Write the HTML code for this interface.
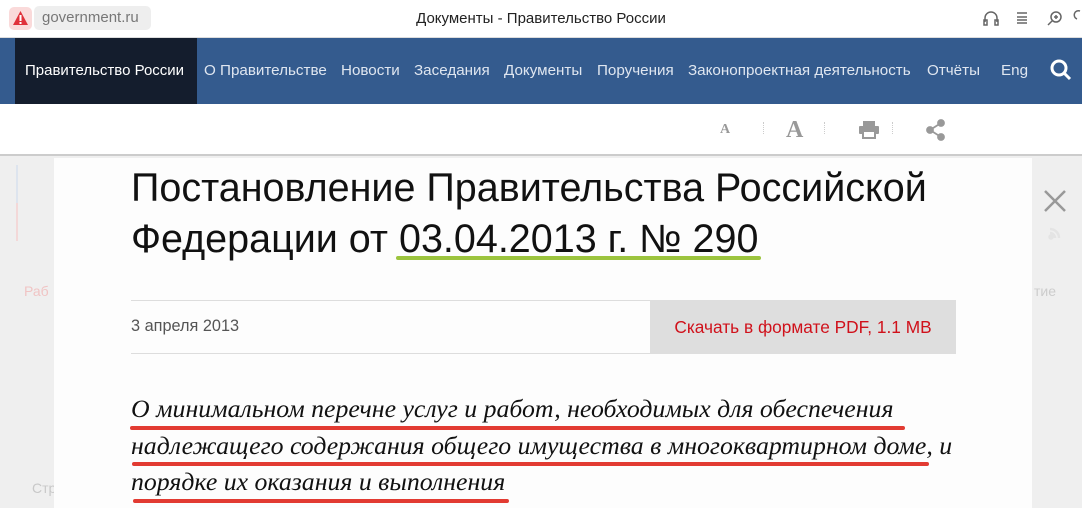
<!DOCTYPE html>
<html><head><meta charset="utf-8"><style>
*{margin:0;padding:0;box-sizing:border-box}
body{width:1082px;height:508px;overflow:hidden;background:#efefef;font-family:"Liberation Sans",sans-serif;position:relative}
.bar{position:absolute;left:0;top:0;width:1082px;height:38px;background:#fff;border-bottom:1px solid #ddd}
.warn{position:absolute;left:9px;top:7px;width:23px;height:23px;background:#fadada;border-radius:5px}
.url{position:absolute;left:34px;top:6px;width:117px;height:24px;background:#eee;border-radius:5px;color:#777;font-size:15px;line-height:24px;padding-left:8px}
.ttl{position:absolute;left:0;width:1082px;top:10px;text-align:center;font-size:15px;color:#222}
.nav{position:absolute;top:38px;left:0;width:1082px;height:66px;background:#345b8e;color:#dfe6f0;font-size:15.2px}
.nav span{position:absolute;top:24px}
.brand{position:absolute;left:15px;top:0;width:182px;height:66px;background:#141d2d;color:#fff;font-size:15px;line-height:66px;padding-left:10px}
.tool{position:absolute;top:104px;left:0;width:1082px;height:52px;background:#fff;border-bottom:2px solid #ccc}
.panel{position:absolute;left:54px;top:158px;width:978px;height:350px;background:#fdfdfd}
h1{position:absolute;left:131px;top:163px;font-weight:normal;font-size:39.5px;line-height:51px;color:#111;white-space:nowrap}
.p{position:absolute;font-family:"Liberation Serif",serif;font-style:italic;font-size:25.8px;color:#111;white-space:nowrap}
.u{position:absolute;height:4px;background:#e23b32;border-radius:2px}
</style></head><body>
<div class="bar">
<div class="warn"><svg width="23" height="23"><path d="M11.5 4 L19 18 H4Z" fill="#e0303a"/><rect x="10.5" y="8" width="2" height="6" fill="#fff"/><rect x="10.5" y="15" width="2" height="2" fill="#fff"/></svg></div>
<div class="url">government.ru</div>
<div class="ttl">Документы - Правительство России</div>
<svg style="position:absolute;left:980px;top:8px" width="102" height="22" fill="none" stroke="#666" stroke-width="1.5"><path d="M5 14v-4a6 6 0 0 1 12 0v4M4 12h3v5H4zM15 12h3v5h-3z"/><path d="M37 5h10M37 9h10M37 12h10M37 15h10"/><circle cx="76" cy="9" r="5"/><path d="M72 13l-4 4M76 7v4M74 9h4"/><path d="M100 3a4 4 0 0 0-3 8"/></svg>
</div>
<div class="nav">
<div class="brand">Правительство России</div>
<span style="left:204px">О Правительстве</span>
<span style="left:341px">Новости</span>
<span style="left:414px">Заседания</span>
<span style="left:504px">Документы</span>
<span style="left:597px">Поручения</span>
<span style="left:688px">Законопроектная деятельность</span>
<span style="left:927px">Отчёты</span>
<span style="left:1001px">Eng</span>
<svg style="position:absolute;left:1049px;top:20px" width="24" height="24" fill="none" stroke="#fff" stroke-width="3"><circle cx="10" cy="10" r="7"/><path d="M15 15l6 6"/></svg>
</div>
<div class="tool">
<span style="position:absolute;left:720px;top:18px;font-family:'Liberation Serif',serif;font-weight:bold;font-size:14px;color:#999">A</span>
<span style="position:absolute;left:786px;top:13px;font-family:'Liberation Serif',serif;font-weight:bold;font-size:24px;color:#999">A</span>
<div style="position:absolute;left:763px;top:18px;height:12px;border-left:1px dotted #ccc"></div>
<div style="position:absolute;left:824px;top:18px;height:12px;border-left:1px dotted #ccc"></div>
<div style="position:absolute;left:892px;top:18px;height:12px;border-left:1px dotted #ccc"></div>
<svg style="position:absolute;left:858px;top:16px" width="22" height="20" fill="#999"><rect x="5" y="1" width="12" height="5"/><rect x="1" y="6" width="20" height="8" rx="1"/><rect x="5" y="11" width="12" height="7" fill="#fff" stroke="#999" stroke-width="2"/></svg>
<svg style="position:absolute;left:926px;top:15px" width="20" height="22" fill="#999" stroke="#999" stroke-width="1.8"><circle cx="15" cy="4" r="3"/><circle cx="4" cy="11" r="3"/><circle cx="15" cy="18" r="3"/><path d="M15 4L4 11L15 18" fill="none"/></svg>
</div>
<div style="position:absolute;left:16px;top:165px;width:2px;height:76px;background:linear-gradient(#dde4ee 50%,#f3d8d8 50%)"></div>
<div style="position:absolute;left:24px;top:283px;font-size:14px;color:#f0c4c4">Раб</div>
<div style="position:absolute;left:32px;top:480px;font-size:14px;color:#c8c8c8">Стр</div>
<div style="position:absolute;left:1034px;top:283px;font-size:14px;color:#ccc">тие</div>
<div class="panel"></div>
<svg style="position:absolute;left:1043px;top:189px" width="24" height="24" stroke="#999" stroke-width="2.5"><path d="M2 2L22 22M22 2L2 22"/></svg>
<svg style="position:absolute;left:1048px;top:224px" width="16" height="16" fill="none" stroke="#e4e4e4" stroke-width="2.5"><path d="M2 5a9 9 0 0 1 9 9M2 9a5 5 0 0 1 5 5"/><circle cx="3" cy="13" r="1.5" fill="#e4e4e4"/></svg>
<h1>Постановление Правительства Российской<br>Федерации от 03.04.2013 г. № 290</h1>
<div style="position:absolute;left:396px;top:256px;width:365px;height:4px;background:#9cc43e;border-radius:2px"></div>
<div style="position:absolute;left:131px;top:300px;width:825px;border-top:1px solid #ddd"></div>
<div style="position:absolute;left:131px;top:353px;width:825px;border-top:1px solid #ddd"></div>
<div style="position:absolute;left:131px;top:317px;font-size:16.3px;color:#555">3 апреля 2013</div>
<div style="position:absolute;left:650px;top:300px;width:306px;height:54px;background:#dedede;color:#d0111b;font-size:17.3px;line-height:54px;text-align:center">Скачать в формате PDF, 1.1 MB</div>
<div class="p" style="left:131px;top:394px">О минимальном перечне услуг и работ, необходимых для обеспечения</div>
<div class="p" style="left:131px;top:431px">надлежащего содержания общего имущества в многоквартирном доме, и</div>
<div class="p" style="left:131px;top:467px">порядке их оказания и выполнения</div>
<div class="u" style="left:130px;top:426px;width:775px"></div>
<div class="u" style="left:132px;top:462px;width:797px"></div>
<div class="u" style="left:133px;top:499px;width:376px"></div>
</body></html>
